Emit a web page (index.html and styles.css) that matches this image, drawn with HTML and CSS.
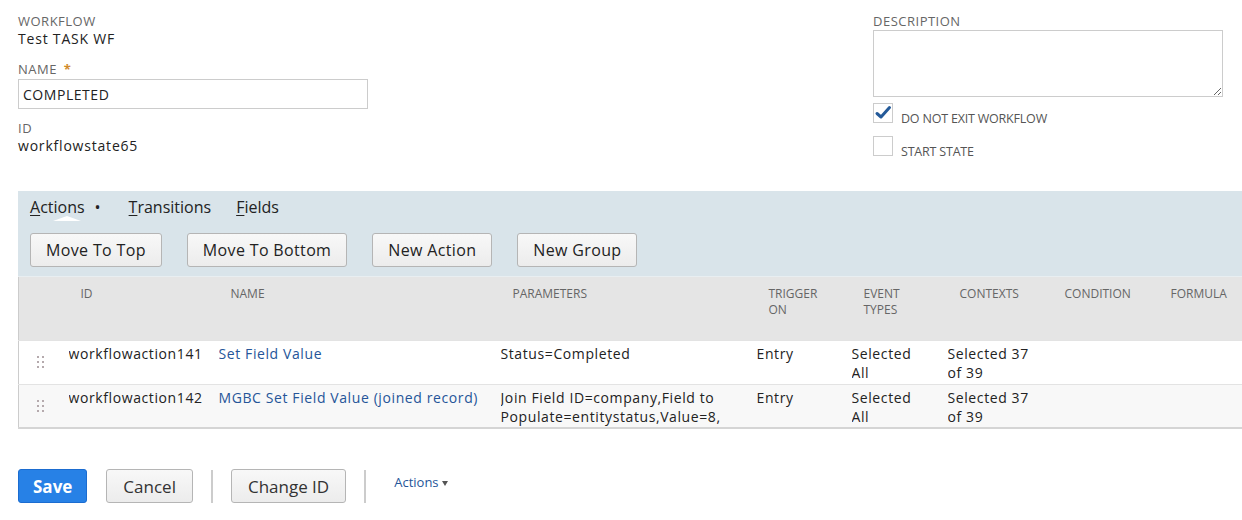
FILE: index.html
```html
<!DOCTYPE html>
<html lang="en">
<head>
  <meta charset="UTF-8">
  <title>Workflow State</title>
  <link rel="stylesheet" href="styles.css">
</head>
<body>
  <!-- State fields -->
  <div class="top">
    <div class="col">
      <div class="lbl">WORKFLOW</div>
      <div class="val">Test TASK WF</div>

      <div class="lbl lbl-gap">NAME <span class="req">*</span></div>
      <input type="text" class="txt" value="COMPLETED">

      <div class="lbl lbl-gap2">ID</div>
      <div class="val">workflowstate65</div>
    </div>

    <div class="col">
      <div class="lbl">DESCRIPTION</div>
      <textarea class="desc"></textarea>

      <div class="chk-row">
        <span class="chk">
          <svg width="18" height="18" viewBox="0 0 18 18"><path d="M3 9.5 L7 13 L15.5 3.5" fill="none" stroke="#245a99" stroke-width="3" stroke-linecap="round" stroke-linejoin="round"/></svg>
        </span>
        <span class="chk-lbl">DO NOT EXIT WORKFLOW</span>
      </div>
      <div class="chk-row chk-row2">
        <span class="chk"></span>
        <span class="chk-lbl">START STATE</span>
      </div>
    </div>
  </div>

  <!-- Sublist panel -->
  <div class="panel">
    <div class="tabs">
      <span class="tab active"><u>A</u>ctions<span class="dot">&bull;</span></span>
      <span class="tab"><u>T</u>ransitions</span>
      <span class="tab"><u>F</u>ields</span>
    </div>
    <div class="btns">
      <button class="btn">Move To Top</button>
      <button class="btn">Move To Bottom</button>
      <button class="btn">New Action</button>
      <button class="btn">New Group</button>
    </div>
  </div>

  <table class="grid">
    <colgroup>
      <col style="width:38px">
      <col style="width:150px">
      <col style="width:282px">
      <col style="width:256px">
      <col style="width:95px">
      <col style="width:96px">
      <col style="width:105px">
      <col style="width:106px">
      <col>
    </colgroup>
    <thead>
      <tr>
        <th></th>
        <th>ID</th>
        <th>NAME</th>
        <th>PARAMETERS</th>
        <th>TRIGGER<br>ON</th>
        <th>EVENT<br>TYPES</th>
        <th>CONTEXTS</th>
        <th>CONDITION</th>
        <th>FORMULA</th>
      </tr>
    </thead>
    <tbody>
      <tr>
        <td><span class="drag"><i></i><i></i><i></i><i></i><i></i><i></i></span></td>
        <td><div class="cell">workflowaction141</div></td>
        <td><div class="cell"><a href="#">Set Field Value</a></div></td>
        <td><div class="cell">Status=Completed</div></td>
        <td><div class="cell">Entry</div></td>
        <td class="narrow"><div class="cell">Selected All</div></td>
        <td><div class="cell">Selected 37 of 39</div></td>
        <td></td>
        <td></td>
      </tr>
      <tr class="alt">
        <td><span class="drag"><i></i><i></i><i></i><i></i><i></i><i></i></span></td>
        <td><div class="cell">workflowaction142</div></td>
        <td><div class="cell"><a href="#">MGBC Set Field Value (joined record)</a></div></td>
        <td><div class="cell">Join Field ID=company,Field to Populate=entitystatus,Value=8,</div></td>
        <td><div class="cell">Entry</div></td>
        <td class="narrow"><div class="cell">Selected All</div></td>
        <td><div class="cell">Selected 37 of 39</div></td>
        <td></td>
        <td></td>
      </tr>
    </tbody>
  </table>

  <!-- Footer buttons -->
  <div class="foot">
    <button class="btn btn-save">Save</button>
    <button class="btn btn-foot">Cancel</button>
    <span class="sep"></span>
    <button class="btn btn-foot">Change ID</button>
    <span class="sep"></span>
    <a href="#" class="more">Actions <span class="caret"></span></a>
  </div>
</body>
</html>
```

FILE: styles.css
```css
body {
  margin: 0;
  padding: 13px 0 0;
  font-family: 'Open Sans', sans-serif;
  color: #222;
  background: #fff;
  width: 1242px;
}

.top {
  display: flex;
  justify-content: space-between;
  padding: 0 19px 0 18px;
}

.col {
  width: 350px;
}

.lbl {
  font-size: 13px;
  line-height: 16px;
  color: #666;
  letter-spacing: 0.5px;
}

.lbl-gap {
  margin-top: 12px;
}

.lbl-gap2 {
  margin-top: 11px;
}

.req {
  color: #d18b2c;
  font-weight: bold;
  margin-left: 3px;
}

.val {
  font-size: 14px;
  line-height: 20px;
  letter-spacing: 0.8px;
}

.txt {
  display: block;
  width: 350px;
  height: 30px;
  margin-top: 2px;
  padding: 0 4px;
  border: 1px solid #ccc;
  box-sizing: border-box;
  font-family: inherit;
  font-size: 14px;
  letter-spacing: 0.55px;
  color: #222;
}

.desc {
  display: block;
  width: 350px;
  height: 67px;
  margin: 1px 0 0;
  border: 1px solid #ccc;
  box-sizing: border-box;
  resize: both;
}

.chk-row {
  display: flex;
  align-items: flex-end;
  margin-top: 6px;
}

.chk-row2 {
  margin-top: 13px;
}

.chk {
  width: 20px;
  height: 20px;
  border: 1px solid #ccc;
  box-sizing: border-box;
  display: flex;
  align-items: center;
  justify-content: center;
  background: #fff;
}

.chk-lbl {
  margin-left: 8px;
  font-size: 12.5px;
  line-height: 16px;
  letter-spacing: -0.2px;
  color: #555;
  position: relative;
  top: 4px;
}

.panel {
  margin: 35px 0 0 18px;
  background: #d9e4ea;
  padding: 5px 0 9px 12px;
  border-bottom: 1px solid #e8eef1;
}

.tabs {
  display: flex;
  gap: 25px;
  font-size: 16px;
  line-height: 22px;
  color: #222;
}

.tab {
  position: relative;
}

.tab u {
  text-decoration-thickness: 1px;
  text-underline-offset: 2px;
}

.dot {
  margin: 0 3px 0 10px;
}

.tab.active::after {
  content: "";
  position: absolute;
  left: 50%;
  bottom: -3px;
  margin-left: -14px;
  border-left: 14px solid transparent;
  border-right: 14px solid transparent;
  border-bottom: 5px solid #fff;
}

.btns {
  display: flex;
  gap: 25px;
  margin-top: 15px;
}

.btn {
  height: 34px;
  padding: 0 15px;
  font-family: inherit;
  font-size: 16px;
  letter-spacing: 0.35px;
  color: #222;
  background: linear-gradient(#f8f8f8, #ececec);
  border: 1px solid #b5b5b5;
  border-radius: 3px;
  cursor: pointer;
}

.grid {
  margin-left: 18px;
  width: 1224px;
  border-collapse: collapse;
  table-layout: fixed;
  border-left: 1px solid #ccc;
  border-bottom: 2px solid #d5d5d5;
}

.grid th {
  background: #e5e5e5;
  height: 63px;
  padding: 9px 6px 0 24px;
  box-sizing: border-box;
  vertical-align: top;
  text-align: left;
  font-weight: normal;
  font-size: 12px;
  line-height: 16px;
  color: #666;
}

.grid td {
  height: 44px;
  padding: 3px 2px 0 12px;
  box-sizing: border-box;
  vertical-align: top;
  font-size: 14px;
  line-height: 19px;
  letter-spacing: 0.6px;
  border-top: 1px solid #e3e3e3;
}

.grid td.narrow {
  padding-right: 20px;
}

.grid tr.alt td {
  background: #f8f8f8;
}

.cell {
  max-height: 38px;
  overflow: hidden;
}

.grid a {
  color: #255599;
  text-decoration: none;
}

.drag {
  display: grid;
  grid-template-columns: 2px 2px;
  column-gap: 3px;
  row-gap: 3px;
  margin: 12px 0 0 6px;
  width: 7px;
}

.drag i {
  width: 2px;
  height: 2px;
  background: #b5aaad;
}

.foot {
  display: flex;
  align-items: center;
  gap: 18px;
  margin: 40px 0 0 18px;
}

.btn-foot {
  height: 34px;
  padding: 0 16px;
  font-size: 17px;
  letter-spacing: 0;
  color: #333;
}

.btn-save {
  height: 34px;
  margin-right: 1px;
  padding: 0 14px;
  font-size: 17px;
  font-weight: bold;
  letter-spacing: 0;
  color: #fff;
  background: #2781e6;
  border-color: #1b6cd0;
}

.sep {
  width: 2px;
  height: 33px;
  background: #ccc;
}

.more {
  margin-left: 10px;
  font-size: 13px;
  color: #255599;
  text-decoration: none;
  position: relative;
  top: -4px;
}

.caret {
  display: inline-block;
  border-left: 3px solid transparent;
  border-right: 3px solid transparent;
  border-top: 5px solid #555;
  vertical-align: middle;
}
```
